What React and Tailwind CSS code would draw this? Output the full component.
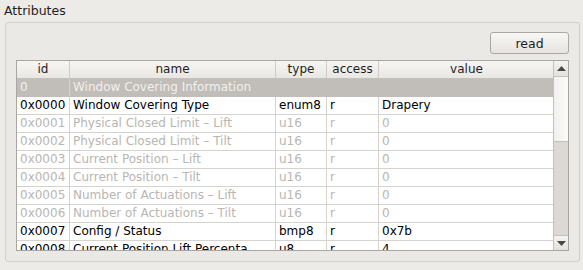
const cols = 'grid grid-cols-[53px_206px_51px_52px_175px]'

const rows = [
  { id: '0', name: 'Window Covering Information', type: '', access: '', value: '', kind: 'section' },
  { id: '0x0000', name: 'Window Covering Type', type: 'enum8', access: 'r', value: 'Drapery', kind: 'on' },
  { id: '0x0001', name: 'Physical Closed Limit – Lift', type: 'u16', access: 'r', value: '0', kind: 'off' },
  { id: '0x0002', name: 'Physical Closed Limit – Tilt', type: 'u16', access: 'r', value: '0', kind: 'off' },
  { id: '0x0003', name: 'Current Position – Lift', type: 'u16', access: 'r', value: '0', kind: 'off' },
  { id: '0x0004', name: 'Current Position – Tilt', type: 'u16', access: 'r', value: '0', kind: 'off' },
  { id: '0x0005', name: 'Number of Actuations – Lift', type: 'u16', access: 'r', value: '0', kind: 'off' },
  { id: '0x0006', name: 'Number of Actuations – Tilt', type: 'u16', access: 'r', value: '0', kind: 'off' },
  { id: '0x0007', name: 'Config / Status', type: 'bmp8', access: 'r', value: '0x7b', kind: 'on' },
  { id: '0x0008', name: 'Current Position Lift Percenta', type: 'u8', access: 'r', value: '4', kind: 'on' },
]

const headers = ['id', 'name', 'type', 'access', 'value']

const Row = ({ row }) => {
  const section = row.kind === 'section'
  const text = section ? 'text-[#f2f0ed]' : row.kind === 'off' ? 'text-[#b9b6b1]' : 'text-black'
  const bg = section ? 'bg-[#c1bdb9]' : 'bg-white'
  const line = section ? 'border-[#c1bdb9]' : 'border-[#d6d3cf]'
  const cells = [row.id, row.name, row.type, row.access, row.value]
  return (
    <div className={`${cols} h-[18px] shrink-0 border-b ${line} ${bg} ${text}`}>
      {cells.map((c, i) => (
        <div key={i} className={`px-[3px] leading-[17px] whitespace-nowrap overflow-hidden ${i < 4 && !section ? 'border-r border-[#d6d3cf]' : ''} ${section && i === 0 ? 'border-r border-[#d6d3cf]' : ''}`}>
          {c}
        </div>
      ))}
    </div>
  )
}

const Arrow = ({ up }) => (
  <svg width="9" height="5" viewBox="0 0 9 5">
    <path d={up ? 'M0 5 L4.5 0 L9 5 Z' : 'M0 0 L4.5 5 L9 0 Z'} fill="#4a4845" />
  </svg>
)

export default function App() {
  return (
    <div className="w-[583px] h-[270px] bg-[#edebe8] text-[12px] text-[#1e1e1e] overflow-hidden" style={{ fontFamily: '"DejaVu Sans", sans-serif' }}>
      <div className="pl-[4px] pt-[2px] h-[22px] leading-[17px] text-[12.5px]">Attributes</div>
      <div className="ml-[5px] w-[575px] h-[240px] border border-[#d3cfca] rounded-[3px] bg-[#ebe9e5] pl-[10px] pr-[10px] pt-[9px] flex flex-col">
        <div className="flex justify-end">
          <button className="w-[79px] h-[22px] rounded-[3px] border border-[#aca8a3] bg-gradient-to-b from-[#f8f7f5] to-[#e7e4e0] text-[12.5px] text-[#1e1e1e] leading-[19px]">
            read
          </button>
        </div>
        <div className="mt-[6px] w-[553px] h-[191px] border border-[#a9a5a0] flex bg-white overflow-hidden">
          <div className="w-[537px] flex flex-col overflow-hidden">
            <div className={`${cols} h-[18px] shrink-0 bg-gradient-to-b from-[#f7f6f4] to-[#e9e7e3] border-b border-[#c4c0bb] text-[#1e1e1e]`}>
              {headers.map((h, i) => (
                <div key={h} className={`text-center leading-[17px] ${i < 4 ? 'border-r border-[#cfcbc6]' : ''}`}>
                  {h}
                </div>
              ))}
            </div>
            {rows.map(r => (
              <Row key={r.id} row={r} />
            ))}
          </div>
          <div className="w-[15px] border-l border-[#c4c0bb] flex flex-col bg-[#dcd9d5]">
            <div className="h-[16px] shrink-0 flex items-center justify-center bg-gradient-to-b from-[#f4f3f1] to-[#e4e1dd] border-b border-[#c4c0bb]">
              <Arrow up />
            </div>
            <div className="h-[65px] shrink-0 bg-gradient-to-r from-[#f1f0ee] to-[#fbfbfa] border-b border-[#c4c0bb]" />
            <div className="flex-1" />
            <div className="h-[15px] shrink-0 flex items-center justify-center bg-gradient-to-b from-[#f4f3f1] to-[#e4e1dd] border-t border-[#c4c0bb]">
              <Arrow />
            </div>
          </div>
        </div>
      </div>
    </div>
  )
}
